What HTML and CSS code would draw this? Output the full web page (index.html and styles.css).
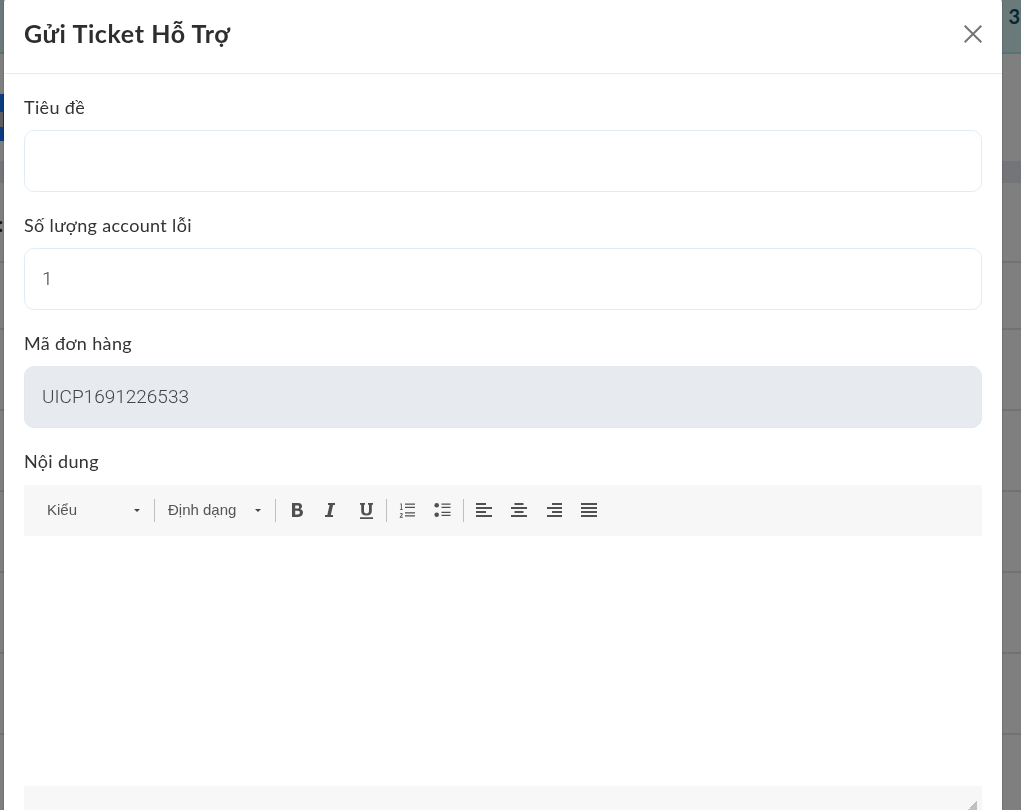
FILE: index.html
```html
<!DOCTYPE html>
<html lang="vi">
<head>
<meta charset="utf-8">
<title>Gửi Ticket Hỗ Trợ</title>
<link rel="stylesheet" href="styles.css">
</head>
<body>
<div class="page">
  <div class="row row-head"><span class="row-num">3</span></div>
  <div class="row row-a"></div>
  <div class="row row-band"></div>
  <div class="row row-b"></div>
  <div class="row row-s"></div>
  <div class="row row-c"></div>
  <div class="row row-c"></div>
  <div class="row row-c"></div>
  <div class="row row-c"></div>
  <div class="row row-c"></div>
  <div class="row row-c"></div>
</div>
<div class="blue-tab"><i class="blue-btn"></i></div>
<span class="colon">:</span>
<div class="backdrop"></div>
<div class="modal">
  <header class="modal-header">
    <h4 class="modal-title">Gửi Ticket Hỗ Trợ</h4>
    <svg class="close" viewBox="0 0 18 18" width="18" height="18" aria-label="Đóng"><path d="M.7.7 17.300 17.300M17.300.7.7 17.300"/></svg>
  </header>
  <div class="modal-body">
    <div class="field">
      <label class="label">Tiêu đề</label>
      <div class="input"></div>
    </div>
    <div class="field">
      <label class="label">Số lượng account lỗi</label>
      <div class="input">1</div>
    </div>
    <div class="field">
      <label class="label">Mã đơn hàng</label>
      <div class="input input-disabled">UICP1691226533</div>
    </div>
    <div class="field field-editor">
      <label class="label">Nội dung</label>
      <div class="editor">
        <div class="toolbar">
          <div class="combo combo-style"><span>Kiểu</span><i class="caret"></i></div>
          <i class="sep"></i>
          <div class="combo combo-format"><span>Định dạng</span><i class="caret"></i></div>
          <i class="sep"></i>
          <div class="tools tools-basic">
            <svg class="ico" viewBox="0 0 16 17"><path fill-rule="evenodd" d="M3 1h6c2.600 0 4 1.200 4 3.300 0 1.300-.7 2.300-1.900 2.800 1.700.4 2.900 1.600 2.900 3.500C14 13.400 12.200 15 9.200 15H3zm3.200 2.500v2.900h2.300c1.100 0 1.600-.5 1.600-1.500s-.5-1.400-1.600-1.400zm0 5.200v3.800h2.600c1.300 0 2-.7 2-1.900s-.7-1.900-2-1.900z"/></svg>
            <svg class="ico" viewBox="0 0 16 17"><path d="M4 1h7v2H9.100L6.800 13H9v2H1v-2h2.300L5.600 3H4z"/></svg>
            <svg class="ico" viewBox="0 0 16 17"><path d="M1 1h5v1.800H5v6c0 1.800.8 2.700 2.500 2.700S10 10.600 10 8.800v-6H9V1h5v1.800h-1.200v6.200c0 3-1.800 4.500-5.300 4.500S2.200 12 2.200 9V2.800H1zM1 15.300h13V17H1z"/></svg>
          </div>
          <i class="sep"></i>
          <div class="tools tools-list">
            <svg class="ico ico-thin" viewBox="0 0 16 17"><path d="M1.300 1.500h1.500v5.700h1v.9H.9v-.9h1V2.500H1.300zM.8 11.900c.2-.7.7-1 1.400-1 .9 0 1.500.5 1.500 1.300 0 1-1.100 1.600-1.900 2.500h2v1H.7v-.8c1.200-1.300 2-1.900 2-2.600 0-.4-.2-.6-.6-.6-.3 0-.5.2-.6.6zM6 1.500h10v1.200H6zM6 4.800h10V6H6zM6 10.200h10v1.200H6zM6 13.200h10v1.200H6z"/></svg>
            <svg class="ico ico-thin" viewBox="0 0 16 17"><circle cx="2.700" cy="3.300" r="2.300"/><circle cx="2.700" cy="12.700" r="2.300"/><path d="M7.500 1.500H16.500v1.200H7.500zM7.500 4.800H16.500V6H7.500zM7.500 9.800H16.500V11H7.500zM7.500 12.800H16.500V14H7.500z"/></svg>
          </div>
          <i class="sep"></i>
          <div class="tools tools-align">
            <svg class="ico" viewBox="0 0 16 17"><path d="M0 1h10v2H0zM0 5h16v2H0zM0 9h10v2H0zM0 13h16v2H0z"/></svg>
            <svg class="ico" viewBox="0 0 16 17"><path d="M3.500 1h9v2h-9zM0 5h16v2H0zM3.500 9h9v2h-9zM0 13h16v2H0z"/></svg>
            <svg class="ico" viewBox="0 0 16 17"><path d="M6 1h10v2H6zM1 5h15v2H1zM6 9h10v2H6zM1 13h15v2H1z"/></svg>
            <svg class="ico" viewBox="0 0 16 17"><path d="M0 1h16v2H0zM0 5h16v2H0zM0 9h16v2H0zM0 13h16v2H0z"/></svg>
          </div>
        </div>
        <div class="editor-area"></div>
        <div class="statusbar"><i class="grip"></i></div>
      </div>
    </div>
  </div>
</div>
</body>
</html>
```
FILE: styles.css
```css
* { box-sizing: border-box; }
html, body { margin: 0; height: 100%; overflow: hidden; }
body { font-family: "Lato", "Open Sans", sans-serif; background: #fff; color: #2b2b2b; }

.page { height: 810px; overflow: hidden; background: #fff; }
.row { border-bottom: 2px solid #dfe5ec; text-align: right; }
.row-head { height: 54px; background: #d4f4f4; border-bottom-color: #b0e6e6; }
.row-num { font: 700 20px/32px "Lato", sans-serif; color: #0d4f66; margin-right: 1px; display: inline-block; }
.row-a { height: 107px; background: #fff; border-bottom: 0; }
.row-band { height: 22px; background: #e6ebf2; border-bottom: 0; }
.row-b { height: 80px; }
.row-s { height: 67px; }
.row-c { height: 81px; }

.blue-tab { position: absolute; left: 0; top: 94px; width: 4px; height: 47px; background: #1478ff; }
.blue-btn { position: absolute; left: 0; top: 18px; width: 3px; height: 15px; background: #b8bcc4; }
.colon { position: absolute; left: -2px; top: 212px; font: 700 20px/24px "Lato", sans-serif; color: #2b2b2b; }
.backdrop { position: fixed; inset: 0; background: rgba(0, 0, 0, .5); }

.modal {
  position: absolute; left: 3.500px; top: -5px; width: 998.500px; height: 900px;
  background: #fff; border-radius: 8px; overflow: hidden;
  box-shadow: 0 0 2px rgba(0, 0, 0, .35);
}
.modal-header {
  height: 79px; padding: 0 20px 0 20.500px; border-bottom: 1px solid #e6ecf5;
  display: flex; align-items: center; justify-content: space-between;
}
.modal-title { margin: 0 0 2px; font-size: 25px; font-weight: 700; line-height: 30px; letter-spacing: .6px; color: #2e2e2e; }
.close { stroke: #757575; stroke-width: 2; fill: none; display: block; flex: none; }

.modal-body { padding: 22px 20px 0 20.500px; display: flex; flex-direction: column; gap: 22px; }
.field { display: flex; flex-direction: column; gap: 10px; }
.field-editor { gap: 11px; }
.label { font-size: 18px; line-height: 22px; font-weight: 400; letter-spacing: .35px; color: #333; height: 24px; }
.input {
  height: 62px; border: 1px solid #e2ecf7; border-radius: 10px; padding: 0 17px;
  font-family: "Roboto", sans-serif; font-size: 19px; font-weight: 300; line-height: 60px; color: #444; background: #fff;
}
.input-disabled { background: #e7ebef; border-color: #e2e8ee; }

.editor { display: flex; flex-direction: column; }
.toolbar {
  height: 51px; background: #f7f7f7; display: flex; align-items: center;
  font: 15px/20px "Liberation Sans", Arial, sans-serif; color: #555;
}
.combo { display: flex; align-items: center; justify-content: space-between; height: 26px; padding-bottom: 2px; }
.combo-style { width: 130px; padding-left: 23px; padding-right: 14px; }
.combo-format { width: 120px; padding-left: 13px; padding-right: 14px; }
.caret { width: 0; height: 0; border: 3px solid transparent; border-top: 3px solid #444; border-bottom: 0; margin-top: 2px; }
.sep { width: 1px; height: 23px; background: #bfbfbf; flex: none; }
.tools { display: flex; align-items: center; }
.ico { width: 16px; height: 17px; fill: #505050; display: block; flex: none; overflow: visible; }
.tools-basic { padding-left: 13px; gap: 19px; width: 110px; }
.tools-list { padding-left: 12px; gap: 19px; width: 76px; }
.tools-align { padding-left: 12px; gap: 19px; }
.editor-area { height: 250px; background: #fff; }
.statusbar { height: 40px; background: #f7f7f7; position: relative; }
.grip {
  position: absolute; right: 5px; top: 15px; width: 10px; height: 10px;
  background: linear-gradient(135deg, transparent 50%, #c0c0c0 50%);
}
```
